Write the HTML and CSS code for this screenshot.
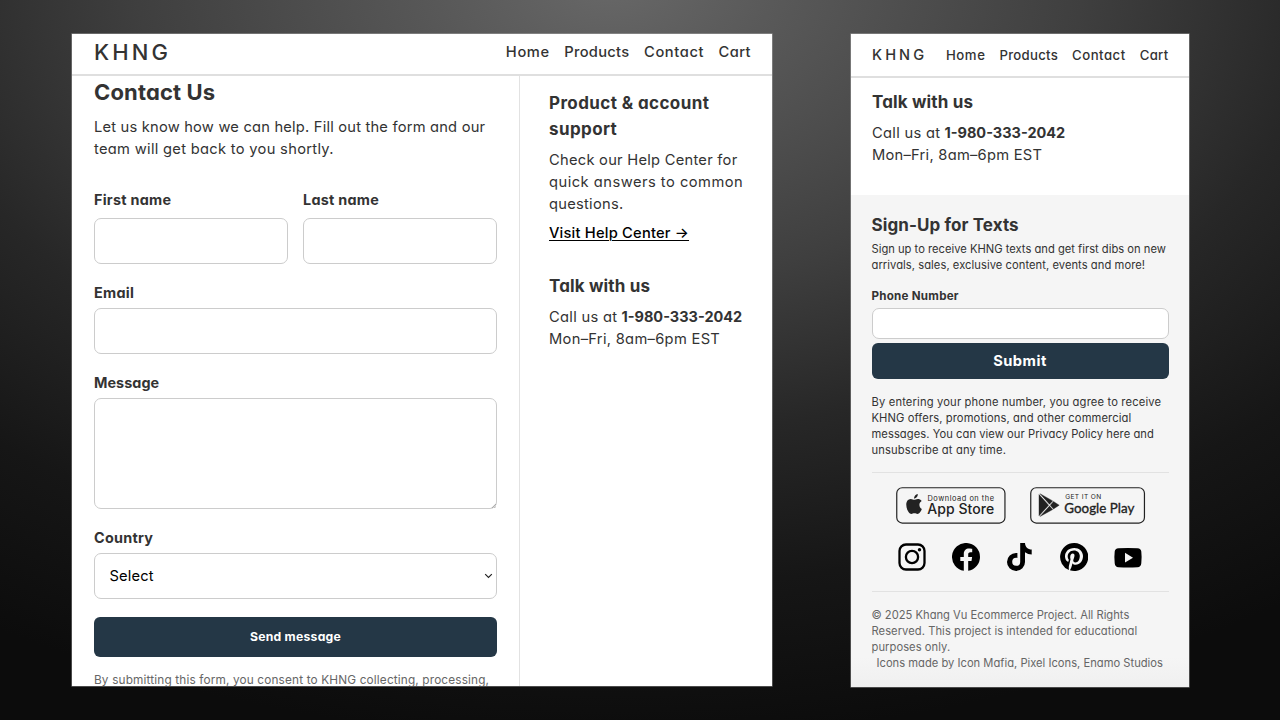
FILE: index.html
```
<!DOCTYPE html>
<html lang="en">
<head>
<meta charset="utf-8">
<title>KHNG Contact</title>
<link rel="stylesheet" href="styles.css">
</head>
<body>
<div class="stage">
  <section class="panel desktop">
    <header class="bar">
      <span class="logo">KHNG</span>
      <nav class="nav"><a class="ls6">Home</a><a class="ls3">Products</a><a class="ls6">Contact</a><a class="ls4">Cart</a></nav>
    </header>
    <div class="columns">
      <main class="form">
        <h1>Contact Us</h1>
        <p class="intro"><span class="line ls2">Let us know how we can help. Fill out the form and our</span><span class="line ls3">team will get back to you shortly.</span></p>
        <div class="pair">
          <div class="field"><label class="ls25">First name</label><div class="input"></div></div>
          <div class="field"><label class="ls25">Last name</label><div class="input"></div></div>
        </div>
        <div class="field email"><label class="ls3">Email</label><div class="input"></div></div>
        <div class="field message"><label class="ls05">Message</label><div class="input area"><svg class="grip" viewBox="0 0 6 6"><path d="M1 6 6 1M4 6 6 4" stroke="#777" stroke-width=".8"/></svg></div></div>
        <div class="field country"><label class="ls25">Country</label><div class="input select"><span class="ls15">Select</span><svg class="chev" viewBox="0 0 10 6"><path d="M1.3 1 5 4.6 8.7 1" fill="none" stroke="#222" stroke-width="1.3"/></svg></div></div>
        <div class="button send"><span class="ls25">Send message</span></div>
        <p class="consent"><span class="line ls15">By submitting this form, you consent to KHNG collecting, processing,</span></p>
      </main>
      <aside class="help">
        <h2><span class="line ls4">Product &amp; account</span><span class="line ls4">support</span></h2>
        <p><span class="line ls25">Check our Help Center for</span><span class="line ls5">quick answers to common</span><span class="line ls25">questions.</span></p>
        <a class="visit ls2">Visit Help Center →</a>
        <h2 class="talk"><span class="line ls15">Talk with us</span></h2>
        <p><span class="line"><span class="ls3">Call us at</span> <strong>1-980-333-2042</strong></span><span class="line ls3">Mon–Fri, 8am–6pm EST</span></p>
      </aside>
    </div>
  </section>
  <section class="panel mobile">
    <header class="bar">
      <span class="logo">KHNG</span>
      <nav class="nav"><a class="ls6">Home</a><a class="ls25">Products</a><a class="ls5">Contact</a><a class="ls3">Cart</a></nav>
    </header>
    <div class="contact">
      <h2><span class="line ls15">Talk with us</span></h2>
      <p><span class="line"><span class="ls3">Call us at</span> <strong>1-980-333-2042</strong></span><span class="line ls25">Mon–Fri, 8am–6pm EST</span></p>
    </div>
    <footer class="foot">
      <h2><span class="line ls1">Sign-Up for Texts</span></h2>
      <p class="small"><span class="line">Sign up to receive KHNG texts and get first dibs on new</span><span class="line ls05">arrivals, sales, exclusive content, events and more!</span></p>
      <label class="ls25">Phone Number</label>
      <div class="input"></div>
      <div class="button submit"><span class="ls5">Submit</span></div>
      <p class="small terms"><span class="line ls15">By entering your phone number, you agree to receive</span><span class="line ls1">KHNG offers, promotions, and other commercial</span><span class="line ls05">messages. You can view our Privacy Policy here and</span><span class="line ls15">unsubscribe at any time.</span></p>
      <div class="badges">
        <svg width="110" height="37" viewBox="0 0 110 37">
          <rect x=".75" y=".75" width="108.2" height="35.3" rx="5.5" fill="none" stroke="#222" stroke-width="1.2"/>
          <g transform="translate(8.8 6.4) scale(.98)" fill="#222"><path d="M14.9 11.7c0-2 1.1-3.2 2.3-4-1-1.5-2.6-2-3.7-2-1.700-.1-3 .9-3.900.9-.8 0-2-.9-3.500-.9C3.300 5.800 1.500 8 1.500 11.700c0 4.700 3 9.300 5.200 9.300 1.100 0 1.600-.7 3.100-.7s1.900.7 3.100.7c1.900 0 3.700-2.900 4.500-5.100-1.700-.8-2.500-2.300-2.500-4.200z"/><path d="M9.400 5.200C9.300 3 11.200.9 13.200.6c.3 2.300-1.700 4.600-3.800 4.600z"/></g>
          <text class="plain" x="31.5" y="13.600" font-size="7.400" textLength="66.500">Download on the</text>
          <text class="plain bold" x="31.200" y="27" font-size="14" textLength="67">App Store</text>
        </svg>
        <svg width="116" height="37" viewBox="0 0 116 37">
          <rect x=".75" y=".75" width="113.700" height="35.300" rx="5.500" fill="none" stroke="#222" stroke-width="1.200"/>
          <path d="M9 7.500V28.800L18.600 18.200zM10 6.700 19.500 17.200 22.700 13.900zM10 29.500 19.500 19.100 22.700 22.500zM20.300 18.200 23.500 14.500 29.200 18.200 23.500 21.900z" fill="#222" stroke="#222" stroke-width=".4"/>
          <text x="35.200" y="12" font-size="6.600" textLength="36">GET IT ON</text>
          <text class="play" x="34.300" y="26.300" font-size="14" textLength="70" lengthAdjust="spacingAndGlyphs">Google Play</text>
        </svg>
      </div>
      <div class="social">
        <svg viewBox="0 0 28 28"><rect x="1.500" y="1.500" width="25" height="25" rx="6.500" fill="none" stroke="#000" stroke-width="2.300"/><circle cx="14" cy="14" r="6.100" fill="none" stroke="#000" stroke-width="2.300"/><circle cx="21.500" cy="6.700" r="1.700"/></svg>
        <svg viewBox="0 0 28 28"><path d="M28 14A14 14 0 1 0 11.800 27.800V18.100H8.300V14h3.500v-3.100c0-3.500 2.100-5.500 5.300-5.500 1.500 0 3.100.3 3.100.3v3.500h-1.700c-1.800 0-2.300 1-2.300 2.200V14h3.900l-.6 4.100h-3.300v9.700A14 14 0 0 0 28 14z"/></svg>
        <svg viewBox="0 0 28 28"><path d="M19 0h-4.800v18.900a4 4 0 1 1-4-4.100c.4 0 .8.100 1.200.2v-4.900c-.4-.1-.8-.1-1.200-.1A9 9 0 1 0 19 18.900V9.200a11.500 11.500 0 0 0 6.700 2.200V6.600C21.900 6.500 19 3.700 19 0z"/></svg>
        <svg viewBox="0 0 28 28"><path d="M14 0A14 14 0 0 0 8.900 27c-.1-1.100-.2-2.800 0-4l1.700-7s-.4-.8-.4-2.100c0-1.900 1.100-3.400 2.500-3.400 1.200 0 1.800.9 1.800 1.900 0 1.200-.8 3-1.200 4.600-.3 1.400.7 2.500 2.100 2.500 2.500 0 4.400-2.600 4.400-6.400 0-3.300-2.400-5.700-5.800-5.700-4 0-6.300 3-6.300 6 0 1.200.5 2.500 1 3.200l.1.400-.4 1.600c-.1.300-.2.300-.5.200-1.800-.8-2.900-3.400-2.900-5.400 0-4.400 3.200-8.500 9.300-8.500 4.900 0 8.700 3.500 8.700 8.100 0 4.900-3.100 8.800-7.300 8.800-1.400 0-2.800-.7-3.200-1.600l-.9 3.300c-.3 1.300-1.200 2.800-1.700 3.800A14 14 0 1 0 14 0z"/></svg>
        <svg viewBox="0 0 28 28"><path fill-rule="evenodd" d="M4.500 5.200Q14 4.600 23.500 5.200q3.500.3 3.800 3.300.7 5.900 0 11.800-.3 3.700-3.800 4-9.500.6-19 0Q1 24 .7 20.300 0 14.400.7 8.500 1 5.500 4.500 5.200zM11 9.800v9.800l8-4.900z"/></svg>
      </div>
      <p class="small legal"><span class="line">© 2025 Khang Vu Ecommerce Project. All Rights</span><span class="line ls05">Reserved. This project is intended for educational</span><span class="line ls05">purposes only.</span><span class="line credit">Icons made by Icon Mafia, Pixel Icons, Enamo Studios</span></p>
    </footer>
  </section>
</div>
</body>
</html>
```
FILE: styles.css
```
*{box-sizing:border-box;margin:0;padding:0}
body{font-family:Inter,sans-serif;font-feature-settings:"cv11";font-size:14.7px;line-height:22px;color:#333;background:#0d0d0d}
.stage{width:1280px;height:720px;overflow:hidden;display:flex;gap:79px;align-items:flex-start;padding:34px 0 0 72px;background:radial-gradient(ellipse 1180px 760px at 610px -20px,#686868 0%,#585858 15%,#3f3f3f 40%,#272727 60%,#161616 80%,#0c0c0c 100%)}
.panel{flex:none;overflow:hidden;background:#fff;box-shadow:0 0 0 .6px rgba(200,200,200,.55)}
.desktop{width:700px;height:652px;display:flex;flex-direction:column}
.mobile{width:338px;height:653px;display:flex;flex-direction:column}
.bar{flex:none;display:flex;justify-content:space-between;align-items:center;border-bottom:2px solid #dfdfdf}
.desktop .bar{height:42px;padding:0 21px 4px 22px}
.mobile .bar{height:44px;padding:0 20.500px 0 21px}
.logo{font-weight:500;font-size:22px;letter-spacing:3.100px}
.mobile .logo{font-size:14.600px;letter-spacing:3.100px}
.nav{display:flex;gap:14.500px;font-weight:500}
.mobile .nav{font-size:13.200px;gap:14px}
.line{display:block;white-space:nowrap;width:max-content}
.columns{flex:1;display:flex;min-height:0}
.form{width:448px;flex:none;padding:0 22px 0 22px;border-right:1px solid #e2e2e2}
h1{font-size:22px;line-height:32px;font-weight:700;letter-spacing:.15px}
h2{font-size:17px;line-height:25.500px;font-weight:700}
.intro{margin-top:8px}
.pair{display:flex;gap:15px;margin-top:29px}
.pair .field{flex:1}
label{display:block;font-weight:700;font-size:14.400px}
.input{height:46px;border:1px solid #ccc;border-radius:7px;background:#fff}
.pair .input{margin-top:7px}
.email{margin-top:18px}
.email .input{margin-top:4px}
.message{margin-top:18px}
.message .input{margin-top:3.500px}
.area{height:111px;display:flex;justify-content:flex-end;align-items:flex-end}
.grip{width:5px;height:5px}
.country{margin-top:18px}
.country .input{margin-top:4px}
.select{display:flex;justify-content:space-between;align-items:center;padding:0 3px 0 14.500px;color:#000}
.chev{width:9px;height:6px}
.button{display:flex;justify-content:center;align-items:center;border-radius:6px;background:#243746;color:#fff;font-weight:700}
.send{height:40px;margin-top:18px;font-size:12.200px}
.consent{margin-top:12px;font-size:11.800px;color:#666}
.help{padding:15px 0 0 29px}
.help p{margin-top:7px}
.visit{display:block;width:max-content;margin-top:7px;color:#000;font-weight:500;text-decoration:underline;text-decoration-thickness:1px;text-underline-offset:2px}
.talk{margin-top:29.500px}
strong{font-weight:700;font-size:14.500px}
.contact{height:117px;padding:12px 0 0 21px}
.contact p{margin-top:6.500px}
.foot{flex:1;padding:18px 20.500px 0 20.500px;background:linear-gradient(#f5f5f5 94%,#f0f0f0)}
.small{font-size:11.200px;line-height:16px}
.foot h2+.small{margin-top:2.500px}
.foot label{margin-top:15px;font-size:11.600px;line-height:16px}
.foot .input{height:31px;margin-top:4px}
.submit{height:36px;margin-top:4px}
.terms{margin-top:15px;padding-bottom:13.500px;border-bottom:1px solid #e2e2e2}
.badges{display:flex;gap:24px;margin-top:14.500px;padding-left:24px}
.badges text{font-family:Inter,sans-serif;fill:#222}
.badges .plain{font-feature-settings:normal}
.badges .bold{font-weight:500}
.badges .play{font-family:Lato,sans-serif;stroke:#222;stroke-width:.35px}
.social{display:flex;justify-content:space-between;padding:19px 26.500px 20px 26px;border-bottom:1px solid #e2e2e2}
.social svg{width:28px;height:28px}
.legal{margin-top:15px;color:#666}
.credit{margin-left:5px}
.ls05{letter-spacing:.05px}
.ls1{letter-spacing:.1px}
.ls15{letter-spacing:.155px}
.ls2{letter-spacing:.2px}
.ls25{letter-spacing:.255px}
.ls3{letter-spacing:.3px}
.ls4{letter-spacing:.4px}
.ls5{letter-spacing:.49px}
.ls6{letter-spacing:.6px}
```
